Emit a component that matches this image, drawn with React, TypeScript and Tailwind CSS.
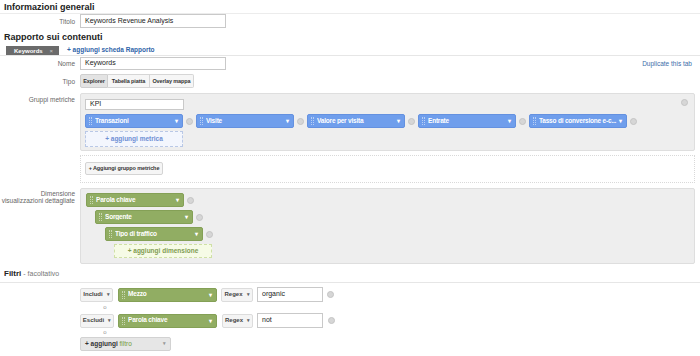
import React from 'react';

const font = "font-['Liberation_Sans',Arial,sans-serif]";

const Remove = ({ className = '' }: { className?: string }) => (
  <span
    className={`inline-block w-[7px] h-[7px] rounded-full bg-[#d6d6d6] border border-[#c4c4c4] shrink-0 ${className}`}
  />
);

const Handle = () => (
  <span className="flex gap-[1px] h-[8px] mr-[3px] shrink-0 opacity-50">
    <span className="w-px h-full border-l border-dotted border-white" />
    <span className="w-px h-full border-l border-dotted border-white" />
  </span>
);

const Chip = ({
  label,
  color,
  width = 'w-[98px]',
}: {
  label: string;
  color: 'blue' | 'green';
  width?: string;
}) => (
  <div
    className={`${width} h-[14px] rounded-[2px] flex items-center pl-[3px] pr-[4px] text-white font-bold text-[6.5px] leading-none shrink-0 ${
      color === 'blue'
        ? 'bg-[#6f9eec] border border-[#6491e0]'
        : 'bg-[#91ad63] border border-[#84a056]'
    }`}
  >
    <Handle />
    <span className="flex-1 overflow-hidden tracking-[-0.2px]">{label}</span>
    <span className="text-[6px] ml-[2px]">▾</span>
  </div>
);

const Input = ({ value, width, height = 'h-[14px]' }: { value: string; width: string; height?: string }) => (
  <div
    className={`${width} ${height} border border-[#c9c9c9] bg-white flex items-center px-[4px] text-[7px] text-[#222]`}
  >
    {value}
  </div>
);

const SmallBtn = ({ label, width }: { label: string; width: string }) => (
  <div
    className={`${width} h-[14px] rounded-[2px] border border-[#dcdcdc] bg-[#f4f4f4] flex items-center justify-center gap-[4px] text-[6px] text-[#444] font-bold`}
  >
    <span>{label}</span>
    <span className="text-[5px] text-[#666]">▾</span>
  </div>
);

const Label = ({ children, className = '' }: { children: React.ReactNode; className?: string }) => (
  <div className={`w-[80px] shrink-0 pr-[5px] text-right text-[6.5px] text-[#666] leading-[7px] ${className}`}>
    {children}
  </div>
);

export default function App() {
  const metrics = ['Transazioni', 'Visite', 'Valore per visita', 'Entrate', 'Tasso di conversione e-c...'];
  const dims = [
    { label: 'Parola chiave', pl: 'pl-[5px]' },
    { label: 'Sorgente', pl: 'pl-[14px]' },
    { label: 'Tipo di traffico', pl: 'pl-[24px]' },
  ];

  return (
    <div className={`w-[700px] h-[356px] bg-white overflow-hidden whitespace-nowrap ${font} text-[#333]`}>
      {/* Informazioni generali */}
      <div className="h-[14px] border-b border-[#ececec] px-[4px] pt-[3px]">
        <div className="text-[9px] leading-[9px] font-bold text-[#222]">Informazioni generali</div>
      </div>
      <div className="flex items-center">
        <Label>Titolo</Label>
        <Input value="Keywords Revenue Analysis" width="w-[146px]" />
      </div>

      {/* Rapporto sui contenuti */}
      <div className="mt-[5px] px-[4px] text-[9px] leading-[9px] font-bold text-[#222]">
        Rapporto sui contenuti
      </div>
      <div className="h-[14px] border-b border-[#e6e6e6] flex items-end pl-[6px]">
        <div className="w-[53px] h-[9px] bg-[#6b6b6b] flex items-center justify-between pl-[8px] pr-[6px] text-[6px] font-bold text-white leading-none">
          <span>Keywords</span>
          <span className="font-normal text-[#ccc]">×</span>
        </div>
        <div className="ml-[8px] mb-[2px] text-[6.5px] leading-none font-bold text-[#2f64a8]">
          + aggiungi scheda Rapporto
        </div>
      </div>
      <div className="flex items-center mt-[1px]">
        <Label>Nome</Label>
        <Input value="Keywords" width="w-[146px]" height="h-[13px]" />
        <div className="ml-auto mr-[8px] self-start mt-[2px] text-[6.5px] text-[#3d6ea8]">Duplicate this tab</div>
      </div>
      <div className="flex items-center mt-[4px]">
        <Label>Tipo</Label>
        <div className="flex h-[14px] text-[5.5px] font-bold text-[#333] tracking-[-0.1px]">
          <div className="w-[28px] border border-[#cfcfcf] bg-[#e3e3e3] rounded-l-[2px] flex items-center justify-center">
            Explorer
          </div>
          <div className="w-[42px] border-y border-r border-[#d6d6d6] bg-[#f6f6f6] flex items-center justify-center">
            Tabella piatta
          </div>
          <div className="w-[44px] border-y border-r border-[#d6d6d6] bg-[#f6f6f6] rounded-r-[2px] flex items-center justify-center">
            Overlay mappa
          </div>
        </div>
      </div>

      {/* Gruppi metriche */}
      <div className="flex mt-[5px]">
        <Label className="pt-[3px]">Gruppi metriche</Label>
        <div className="relative w-[615px] h-[58px] bg-[#eeeeee] border border-[#dedede] rounded-[2px] pl-[4px] pt-[5px]">
          <Input value="KPI" width="w-[99px]" height="h-[11px]" />
          <div className="flex items-center mt-[4px]">
            {metrics.map((m) => (
              <div key={m} className="flex items-center">
                <Chip label={m} color="blue" />
                <Remove className="mx-[3px]" />
              </div>
            ))}
          </div>
          <div className="w-[98px] h-[16px] mt-[3px] border border-dashed border-[#b9c8e6] bg-[#f3f6fd] flex items-center justify-center text-[6.5px] font-bold text-[#6f8fd4]">
            + aggiungi metrica
          </div>
          <Remove className="absolute right-[6px] top-[5px]" />
        </div>
      </div>
      <div className="flex mt-[4px]">
        <div className="w-[80px] shrink-0" />
        <div className="w-[615px] h-[28px] border border-dotted border-[#d9d9d9] pl-[4px] pt-[6px]">
          <div className="w-[78px] h-[13px] border border-[#d4d4d4] bg-[#f5f5f5] rounded-[2px] flex items-center justify-center text-[5.5px] font-bold text-[#333] tracking-[-0.1px]">
            + Aggiungi gruppo metriche
          </div>
        </div>
      </div>

      {/* Dimensioni */}
      <div className="flex mt-[5px]">
        <Label className="pt-[2px]">
          Dimensione
          <br />
          visualizzazioni dettagliate
        </Label>
        <div className="w-[615px] h-[76px] bg-[#eeeeee] border border-[#dedede] rounded-[2px] pt-[4px] flex flex-col gap-[3px]">
          {dims.map((d) => (
            <div key={d.label} className={`flex items-center ${d.pl}`}>
              <Chip label={d.label} color="green" />
              <Remove className="ml-[3px]" />
            </div>
          ))}
          <div className="pl-[33px]">
            <div className="w-[98px] h-[14px] border border-dashed border-[#cfe0a6] bg-[#f6fbe6] flex items-center justify-center text-[6.5px] font-bold text-[#7f9c52]">
              + aggiungi dimensione
            </div>
          </div>
        </div>
      </div>

      {/* Filtri */}
      <div className="h-[13px] mt-[6px] border-b border-[#e6e6e6] px-[4px] flex items-start">
        <span className="text-[8px] leading-[8px] font-bold text-[#222]">Filtri</span>
        <span className="text-[7px] leading-[8px] text-[#777] ml-[2px]">- facoltativo</span>
      </div>
      <div className="pl-[80px] mt-[4px]">
        <div className="flex items-center">
          <SmallBtn label="Includi" width="w-[33px]" />
          <div className="ml-[5px]">
            <Chip label="Mezzo" color="green" width="w-[99px]" />
          </div>
          <div className="ml-[4px]">
            <SmallBtn label="Regex" width="w-[32px]" />
          </div>
          <div className="ml-[4px]">
            <Input value="organic" width="w-[66px]" height="h-[15px]" />
          </div>
          <Remove className="ml-[4px]" />
        </div>
        <div className="h-[11px] w-[50px] text-center text-[6px] leading-[11px] text-[#999]">o</div>
        <div className="flex items-center">
          <SmallBtn label="Escludi" width="w-[34px]" />
          <div className="ml-[4px]">
            <Chip label="Parola chiave" color="green" width="w-[99px]" />
          </div>
          <div className="ml-[5px]">
            <SmallBtn label="Regex" width="w-[31px]" />
          </div>
          <div className="ml-[4px]">
            <Input value="not" width="w-[66px]" height="h-[15px]" />
          </div>
          <Remove className="ml-[5px]" />
        </div>
        <div className="h-[9px] w-[50px] text-center text-[6px] leading-[9px] text-[#999]">o</div>
        <div className="w-[91px] h-[14px] rounded-[2px] border border-[#d2d2d2] bg-[#e6e6e6] flex items-center pl-[4px] pr-[4px] text-[6.5px] font-bold text-[#333]">
          <span>
            + aggiungi <span className="text-[#6f9a3c] font-normal">filtro</span>
          </span>
          <span className="ml-auto text-[5px] text-[#999]">▾</span>
        </div>
      </div>
    </div>
  );
}
